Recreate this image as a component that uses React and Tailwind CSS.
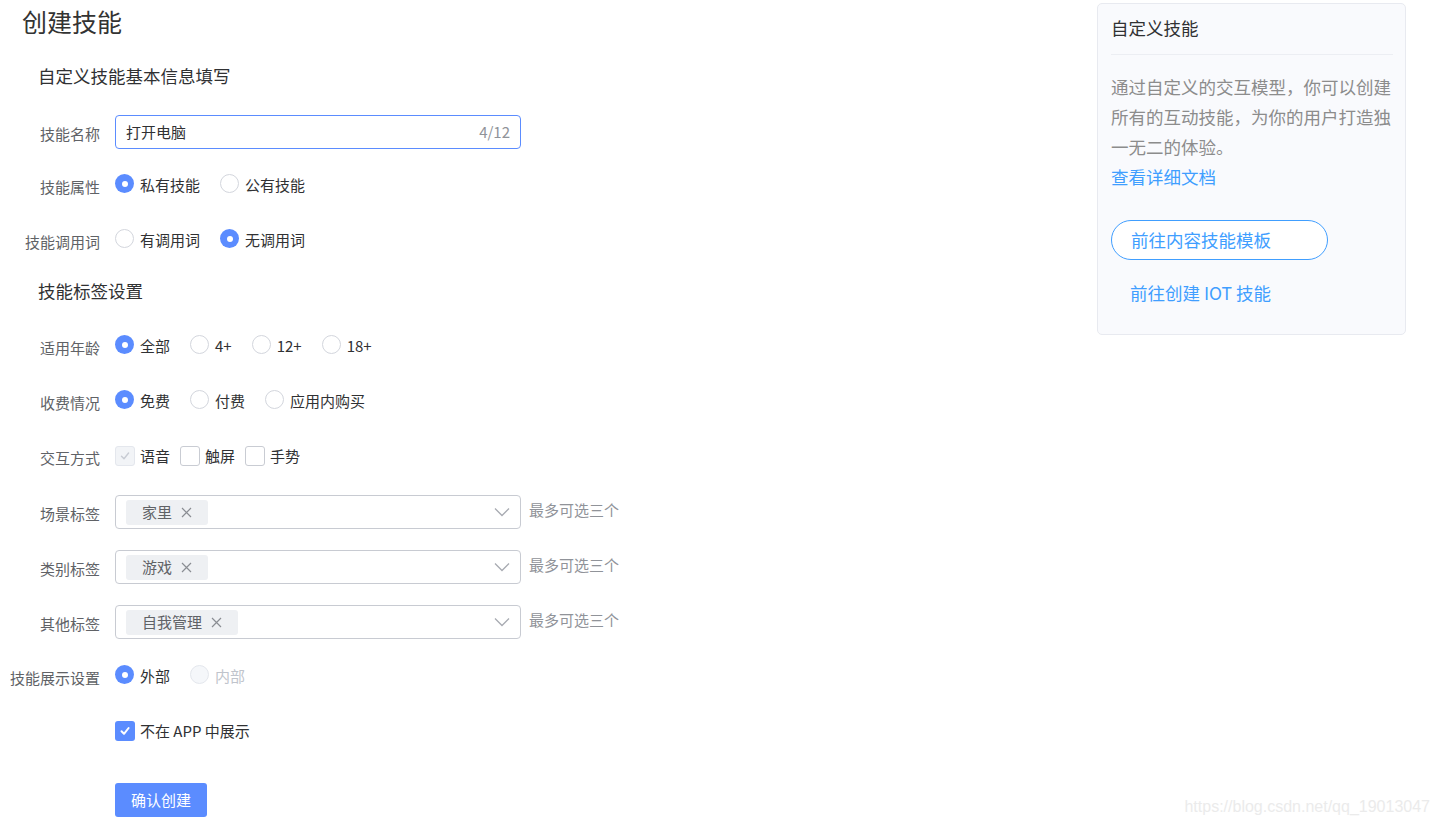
import React from "react";

const font = { fontFamily: '"Noto Sans CJK SC", "Liberation Sans", sans-serif' };

function Radio({ label, checked, disabled }) {
  return (
    <div className="flex items-center mr-[20px]">
      {checked ? (
        <span className="w-[19px] h-[19px] rounded-full bg-[#5b8cff] flex items-center justify-center mt-[-3px]">
          <span className="w-[6px] h-[6px] rounded-full bg-white" />
        </span>
      ) : disabled ? (
        <span className="w-[19px] h-[19px] rounded-full border border-[#e4e7ed] bg-[#f5f7fa] mt-[-3px]" />
      ) : (
        <span className="w-[19px] h-[19px] rounded-full border border-[#d3d6dd] bg-white mt-[-3px]" />
      )}
      <span className={`ml-[6px] text-[15px] leading-[20px] ${disabled ? "text-[#c0c4cc]" : "text-[#303133]"}`}>{label}</span>
    </div>
  );
}

function Check({ label, state }) {
  let box;
  if (state === "checked") {
    box = (
      <span className="w-[20px] h-[20px] rounded-[3px] bg-[#5b8cff] flex items-center justify-center">
        <svg width="12" height="12" viewBox="0 0 12 12"><polyline points="2.5,6.2 5,8.8 9.6,3" fill="none" stroke="#fff" strokeWidth="2" strokeLinecap="round" strokeLinejoin="round" /></svg>
      </span>
    );
  } else if (state === "disabled") {
    box = (
      <span className="w-[20px] h-[20px] rounded-[3px] border border-[#e4e7ed] bg-[#f2f4f7] flex items-center justify-center">
        <svg width="12" height="12" viewBox="0 0 12 12"><polyline points="2.5,6.2 5,8.8 9.6,3" fill="none" stroke="#c8ccd4" strokeWidth="1.4" strokeLinecap="round" strokeLinejoin="round" /></svg>
      </span>
    );
  } else {
    box = <span className="w-[20px] h-[20px] rounded-[3px] border border-[#c9ccd3] bg-white" />;
  }
  return (
    <div className="flex items-center mr-[10px]">
      {box}
      <span className="ml-[5px] text-[15px] leading-[20px] text-[#303133]">{label}</span>
    </div>
  );
}

function Row({ label, children, mb = "mb-[21px]" }) {
  return (
    <div className={`flex items-center h-[34px] ${mb}`}>
      <div className="w-[100px] text-right text-[15px] leading-[20px] text-[#606266] mt-[3px]">{label}</div>
      <div className="ml-[15px] flex items-center">{children}</div>
    </div>
  );
}

function TagSelect({ tag }) {
  return (
    <>
      <div className="w-[406px] h-[34px] border border-[#c8cbd2] rounded-[4px] bg-white flex items-center pl-[10px] pr-[10px]">
        <div className="h-[25px] bg-[#eef0f3] rounded-[3px] flex items-center pl-[16px] pr-[16px]">
          <span className="text-[15px] leading-[20px] text-[#606266]">{tag}</span>
          <svg className="ml-[9px]" width="11" height="11" viewBox="0 0 11 11"><path d="M1 1 L10 10 M10 1 L1 10" stroke="#8a8d93" strokeWidth="1.2" /></svg>
        </div>
        <div className="flex-1" />
        <svg width="16" height="10" viewBox="0 0 16 10"><polyline points="1,1.5 8,8.5 15,1.5" fill="none" stroke="#a8abb2" strokeWidth="1.3" /></svg>
      </div>
      <span className="ml-[8px] text-[15px] leading-[20px] text-[#909399] mt-[-4px]">最多可选三个</span>
    </>
  );
}

export default function App() {
  return (
    <div className="relative w-[1439px] h-[825px] bg-white overflow-hidden flex" style={font}>
      <div className="flex-1">
        <div className="pl-[22px] text-[25px] leading-[42px] text-[#333333]">创建技能</div>
        <div className="pl-[38px] mt-[19px] text-[17.5px] leading-[30px] text-[#303133]">自定义技能基本信息填写</div>
        <div className="mt-[24px]">
          <Row label="技能名称" mb="mb-[19px]">
            <div className="w-[406px] h-[34px] border border-[#5b8cff] rounded-[4px] flex items-center px-[10px]">
              <span className="text-[15px] leading-[20px] text-[#303133]">打开电脑</span>
              <div className="flex-1" />
              <span className="text-[15px] leading-[20px] text-[#909399]">4/12</span>
            </div>
          </Row>
          <Row label="技能属性" mb="mb-[21px]">
            <Radio label="私有技能" checked />
            <Radio label="公有技能" />
          </Row>
          <Row label="技能调用词" mb="mb-[19px]">
            <Radio label="有调用词" />
            <Radio label="无调用词" checked />
          </Row>
        </div>
        <div className="pl-[38px] text-[17.5px] leading-[30px] text-[#303133]">技能标签设置</div>
        <div className="mt-[23px]">
          <Row label="适用年龄">
            <Radio label="全部" checked />
            <Radio label="4+" />
            <Radio label="12+" />
            <Radio label="18+" />
          </Row>
          <Row label="收费情况">
            <Radio label="免费" checked />
            <Radio label="付费" />
            <Radio label="应用内购买" />
          </Row>
          <Row label="交互方式" mb="mb-[22px]">
            <Check label="语音" state="disabled" />
            <Check label="触屏" />
            <Check label="手势" />
          </Row>
          <Row label="场景标签">
            <TagSelect tag="家里" />
          </Row>
          <Row label="类别标签">
            <TagSelect tag="游戏" />
          </Row>
          <Row label="其他标签" mb="mb-[20px]">
            <TagSelect tag="自我管理" />
          </Row>
          <Row label="技能展示设置">
            <Radio label="外部" checked />
            <Radio label="内部" disabled />
          </Row>
          <Row label="" mb="mb-[35px]">
            <Check label="不在 APP 中展示" state="checked" />
          </Row>
          <div className="pl-[115px]">
            <button className="w-[92px] h-[34px] rounded-[3px] bg-[#5b8cff] text-white text-[15px] leading-[20px]">确认创建</button>
          </div>
        </div>
      </div>

      <div className="w-[309px] h-[332px] mt-[3px] mr-[33px] bg-[#f9fafd] border border-[#e8eaf0] rounded-[5px] pl-[13px] pr-[12px] pt-[9px]">
        <div className="text-[17.5px] leading-[30px] text-[#303133]">自定义技能</div>
        <div className="mt-[11px] border-t border-[#eceef3]" />
        <p className="mt-[17px] text-[17.5px] leading-[30px] text-[#8c8c8c]">通过自定义的交互模型，你可以创建所有的互动技能，为你的用户打造独一无二的体验。</p>
        <div className="text-[17.5px] leading-[30px] text-[#409eff]">查看详细文档</div>
        <button className="mt-[28px] w-[217px] h-[40px] rounded-full border border-[#409eff] bg-white text-left pl-[19px] text-[17.5px] leading-[24px] text-[#409eff]">前往内容技能模板</button>
        <div className="mt-[18px] pl-[19px] text-[17.5px] leading-[30px] text-[#409eff]">前往创建 IOT 技能</div>
      </div>

      <div className="absolute right-[9px] bottom-[8px] text-[16px] leading-[20px] text-[#ebebeb]" style={{ fontFamily: '"Liberation Sans", sans-serif' }}>https://blog.csdn.net/qq_19013047</div>
    </div>
  );
}
